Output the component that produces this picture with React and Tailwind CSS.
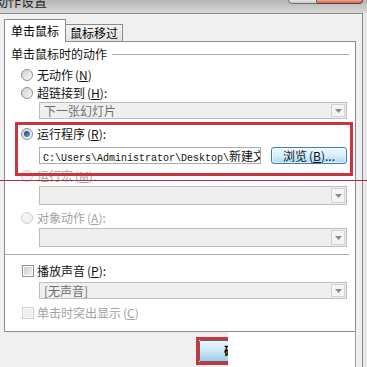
import React from 'react'

// ── Small Win7-style controls ──
function Radio({ checked, disabled }) {
  return (
    <span
      className={[
        'flex h-[12px] w-[12px] shrink-0 items-center justify-center rounded-full border',
        disabled
          ? 'border-[#d0d0d0] bg-[#f3f3f3]'
          : 'border-[#8e8f8f] bg-linear-to-br from-[#cfcfcf] to-[#fbfbfb]',
      ].join(' ')}
    >
      {checked && <span className="h-[6px] w-[6px] rounded-full bg-linear-to-br from-[#173f7a] to-[#6aa8e4]" />}
    </span>
  )
}

function Check({ disabled }) {
  return (
    <span
      className={[
        'flex h-[12px] w-[12px] shrink-0 items-center justify-center border',
        disabled ? 'border-[#d0d0d0] bg-[#f6f6f6]' : 'border-[#8e8f8f] bg-white',
      ].join(' ')}
    >
      <span
        className={
          disabled
            ? 'h-[8px] w-[8px] bg-[#f1f1f1]'
            : 'h-[8px] w-[8px] bg-linear-to-br from-[#c9ccd1] to-[#f4f4f4]'
        }
      />
    </span>
  )
}

function Label({ text, hk, colon, disabled }) {
  return (
    <span className={disabled ? 'whitespace-nowrap text-[#a2a2a2]' : 'whitespace-nowrap text-[#111]'}>
      {text}
      <span className="ml-[2px]">
        (<u>{hk}</u>){colon ? ':' : ''}
      </span>
    </span>
  )
}

function Combo({ text, className }) {
  return (
    <div className={'ml-[34px] flex w-[308px] shrink-0 border border-[#bdbdbd] bg-[#efefef] ' + className}>
      <span className="flex-1 pl-[4px] text-[#6e6e6e] leading-[15px]">{text}</span>
      <span className="m-px flex w-[14px] items-center justify-center border border-[#d2d2d2] bg-[#f4f4f4]">
        <svg width="7" height="4" viewBox="0 0 7 4">
          <path d="M0 0h7L3.5 4z" fill="#8a8a8a" />
        </svg>
      </span>
    </div>
  )
}

export default function App() {
  return (
    <div className="relative h-[367px] w-[367px] overflow-hidden bg-[#e4e4e4] font-['Noto_Sans_CJK_SC','Noto_Sans',sans-serif] text-[12px] leading-[14px] text-black">
      {/* ── Title bar (cut off) ── */}
      <div className="flex h-[13px] justify-between overflow-hidden bg-linear-to-b from-[#b6b6b6] to-[#d8d8d8]">
        <span className="-ml-[5px] -mt-[6px] text-[13px] leading-[13px] text-[#1e1e1e]">动作设置</span>
        <div className="mr-[4px] -mt-px flex h-[5px]">
          <span className="w-[29px] rounded-bl-[4px] border border-[#6e6e6e] bg-linear-to-b from-[#e6e6e6] to-[#c9c9c9]" />
          <span className="w-[46px] rounded-br-[4px] border border-l-0 border-[#6a3b33] bg-linear-to-b from-[#eba48f] to-[#cf6a55]" />
        </div>
      </div>

      <div className="flex h-[354px]">
        <div className="flex flex-1 flex-col border-t border-r border-[#8a8a8a] bg-[#f0f0f0] pl-[4px] pr-[6px]">
          {/* Tabs */}
          <div className="flex h-[27px] shrink-0 items-end">
            <div className="relative z-10 -mb-px flex h-[23px] w-[62px] justify-center border border-b-0 border-[#898c95] bg-white pt-[4px]">
              单击鼠标
            </div>
            <div className="flex h-[17px] w-[57px] justify-center border border-b-0 border-l-0 border-[#898c95] bg-linear-to-b from-[#f3f3f3] to-[#e3e3e3] pt-[1px]">
              鼠标移过
            </div>
          </div>

          {/* Panel */}
          <div className="flex h-[291px] w-[352px] shrink-0 flex-col border border-[#898c95] bg-white">
            <div className="mx-[6px] mt-[5px] flex h-[14px] items-center">
              <span className="text-[#111]">单击鼠标时的动作</span>
              <span className="ml-[5px] h-px flex-1 bg-[#aaaaaa]" />
            </div>

            <div className="ml-[16px] mt-[7px] flex h-[14px] items-center gap-[4px]">
              <Radio />
              <Label text="无动作" hk="N" />
            </div>
            <div className="ml-[16px] mt-[4px] flex h-[14px] items-center gap-[4px]">
              <Radio />
              <Label text="超链接到" hk="H" colon />
            </div>
            <Combo text="下一张幻灯片" className="mt-[2px] h-[17px]" />

            <div className="ml-[16px] mt-[8px] flex h-[14px] items-center gap-[4px]">
              <Radio checked />
              <Label text="运行程序" hk="R" colon />
            </div>
            <div className="ml-[34px] mt-[6px] flex h-[17px] shrink-0">
              <div className="w-[222px] overflow-hidden whitespace-nowrap border border-[#abadb3] bg-white pl-[3px] font-['Liberation_Mono',monospace] text-[10px] leading-[15px] text-[#111]">
                C:\Users\Administrator\Desktop\
                <span className="font-['Noto_Sans_CJK_SC',sans-serif] text-[12px]">新建文</span>
              </div>
              <button
                type="button"
                className="ml-[10px] w-[76px] rounded-[3px] border border-[#3c7fb1] bg-linear-to-b from-[#eef8fe] via-[#d8effb] to-[#a9d8f3] text-[12px] leading-[15px] text-[#111] shadow-[inset_0_0_0_1px_rgba(255,255,255,0.6)]"
              >
                浏览<span className="ml-[2px]">(<u>B</u>)...</span>
              </button>
            </div>

            <div className="ml-[16px] mt-[5px] flex h-[14px] items-center gap-[4px]">
              <Radio disabled />
              <Label text="运行宏" hk="M" colon disabled />
            </div>
            <Combo text="" className="mt-[3px] h-[19px]" />

            <div className="ml-[16px] mt-[6px] flex h-[14px] items-center gap-[4px]">
              <Radio disabled />
              <Label text="对象动作" hk="A" colon disabled />
            </div>
            <Combo text="" className="mt-[3px] h-[19px]" />

            <div className="mr-[6px] mt-[7px] h-px shrink-0 bg-[#aaaaaa]" />

            <div className="ml-[17px] mt-[9px] flex h-[14px] items-center gap-[3px]">
              <Check />
              <Label text="播放声音" hk="P" colon />
            </div>
            <Combo text="[无声音]" className="mt-[4px] h-[17px]" />

            <div className="ml-[17px] mt-[7px] flex h-[14px] items-center gap-[3px]">
              <Check disabled />
              <Label text="单击时突出显示" hk="C" disabled />
            </div>
          </div>

          {/* Bottom buttons row */}
          <div className="flex h-[35px] shrink-0">
            <div className="flex w-[224px] overflow-hidden pl-[192px] pt-[5px]">
              <div className="h-[28px] w-[80px] shrink-0 border-[3px] border-[#c9343f]">
                <button
                  type="button"
                  className="flex h-full w-full items-center justify-center rounded-[2px] border border-[#5b6670] bg-linear-to-b from-[#e7f4fb] via-[#cfe8f6] to-[#9fcbe6] text-[12px] font-semibold text-black"
                >
                  确定
                </button>
              </div>
            </div>
            <div className="w-[128px] border-r border-[#9c9c9c] bg-white" />
          </div>
        </div>
        <div className="w-[4px] bg-[#e8e8e8]" />
      </div>

      {/* ── Annotation overlays ── */}
      <div className="pointer-events-none absolute left-[15px] top-[122px] h-[54px] w-[338px] border-[3px] border-[#c9343f]" />
      <div className="pointer-events-none absolute left-0 top-[180px] h-px w-full bg-[#a8323c]" />
    </div>
  )
}
